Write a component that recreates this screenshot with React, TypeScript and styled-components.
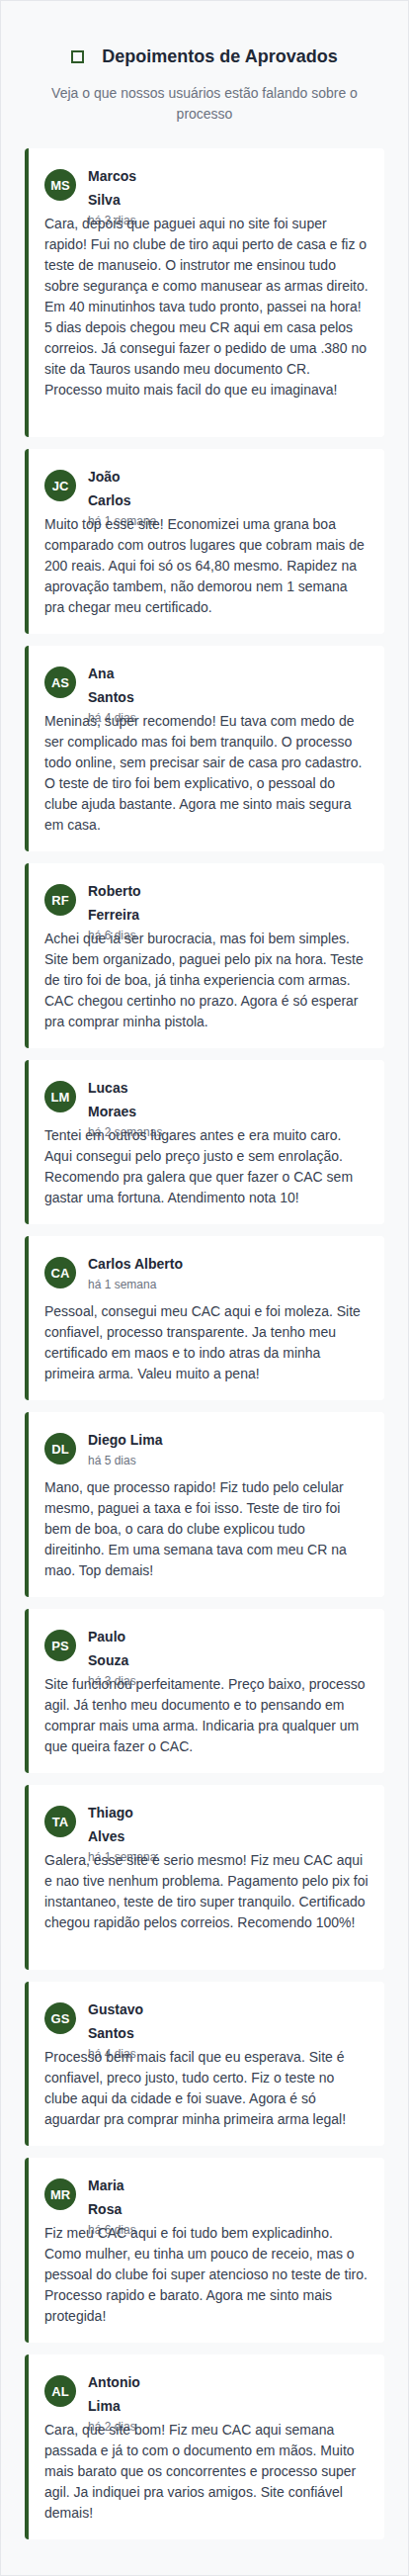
import { createGlobalStyle, styled } from "styled-components";

const GlobalStyle = createGlobalStyle`
    html, body {
        margin: 0;
        padding: 0;
        background: #ffffff;
    }
    body {
        font-family: "Liberation Sans", Arial, Helvetica, sans-serif;
        -webkit-font-smoothing: antialiased;
    }
`;

const Section = styled("section")`
    background: #f8f9fa;
    border: 1px solid #e5e7eb;
    padding: 42px 24px 24px;
    min-height: 2605px;
    box-sizing: border-box;
`;

const Heading = styled("h2")`
    display: flex;
    align-items: center;
    justify-content: center;
    gap: 18px;
    margin: 0;
    font-size: 18px;
    line-height: 28px;
    font-weight: 700;
    color: #1f2937;
`;

const HeadingIcon = styled("span")`
    display: inline-block;
    width: 13px;
    height: 13px;
    box-sizing: border-box;
    border: 2px solid #2d5a27;
`;

const Subtitle = styled("p")`
    margin: 13px 0 24px;
    text-align: center;
    font-size: 14px;
    line-height: 21px;
    color: #6b7280;
`;

const Card = styled("article")<{ $trailing?: boolean }>`
    background: #ffffff;
    border-left: 4px solid #2d5a27;
    border-radius: 4px;
    padding: 16px 16px ${(p) => (p.$trailing ? "37px" : "16px")} 16px;
    margin-bottom: 12px;
`;

const CardHeader = styled("div")`
    display: flex;
    align-items: center;
    height: 42px;
    margin-bottom: 8px;
`;

const Avatar = styled("div")`
    flex: 0 0 32px;
    width: 32px;
    height: 32px;
    border-radius: 50%;
    background: #2d5a27;
    color: #ffffff;
    font-size: 13px;
    font-weight: 700;
    display: flex;
    align-items: center;
    justify-content: center;
    margin-right: 12px;
`;

const Info = styled("div")`
    align-self: flex-start;
    display: flex;
    flex-direction: column;
`;

const Name = styled("div")`
    font-size: 14px;
    font-weight: 700;
    line-height: 24px;
    color: #1f2937;
`;

const When = styled("div")`
    font-size: 12px;
    line-height: 18px;
    color: #6b7280;
`;

const Body = styled("p")`
    margin: 0;
    font-size: 14px;
    line-height: 21px;
    color: #374151;
`;

type Review = {
    initials: string;
    name: string[];
    when: string;
    text: string;
    trailing?: boolean;
};

const reviews: Review[] = [
    {
        initials: "MS",
        name: ["Marcos", "Silva"],
        when: "há 3 dias",
        text: "Cara, depois que paguei aqui no site foi super rapido! Fui no clube de tiro aqui perto de casa e fiz o teste de manuseio. O instrutor me ensinou tudo sobre segurança e como manusear as armas direito. Em 40 minutinhos tava tudo pronto, passei na hora! 5 dias depois chegou meu CR aqui em casa pelos correios. Já consegui fazer o pedido de uma .380 no site da Tauros usando meu documento CR. Processo muito mais facil do que eu imaginava!",
        trailing: true,
    },
    {
        initials: "JC",
        name: ["João", "Carlos"],
        when: "há 1 semana",
        text: "Muito top esse site! Economizei uma grana boa comparado com outros lugares que cobram mais de 200 reais. Aqui foi só os 64,80 mesmo. Rapidez na aprovação tambem, não demorou nem 1 semana pra chegar meu certificado.",
    },
    {
        initials: "AS",
        name: ["Ana", "Santos"],
        when: "há 4 dias",
        text: "Meninas, super recomendo! Eu tava com medo de ser complicado mas foi bem tranquilo. O processo todo online, sem precisar sair de casa pro cadastro. O teste de tiro foi bem explicativo, o pessoal do clube ajuda bastante. Agora me sinto mais segura em casa.",
    },
    {
        initials: "RF",
        name: ["Roberto", "Ferreira"],
        when: "há 6 dias",
        text: "Achei que ia ser burocracia, mas foi bem simples. Site bem organizado, paguei pelo pix na hora. Teste de tiro foi de boa, já tinha experiencia com armas. CAC chegou certinho no prazo. Agora é só esperar pra comprar minha pistola.",
    },
    {
        initials: "LM",
        name: ["Lucas", "Moraes"],
        when: "há 2 semanas",
        text: "Tentei em outros lugares antes e era muito caro. Aqui consegui pelo preço justo e sem enrolação. Recomendo pra galera que quer fazer o CAC sem gastar uma fortuna. Atendimento nota 10!",
    },
    {
        initials: "CA",
        name: ["Carlos Alberto"],
        when: "há 1 semana",
        text: "Pessoal, consegui meu CAC aqui e foi moleza. Site confiavel, processo transparente. Ja tenho meu certificado em maos e to indo atras da minha primeira arma. Valeu muito a pena!",
    },
    {
        initials: "DL",
        name: ["Diego Lima"],
        when: "há 5 dias",
        text: "Mano, que processo rapido! Fiz tudo pelo celular mesmo, paguei a taxa e foi isso. Teste de tiro foi bem de boa, o cara do clube explicou tudo direitinho. Em uma semana tava com meu CR na mao. Top demais!",
    },
    {
        initials: "PS",
        name: ["Paulo", "Souza"],
        when: "há 3 dias",
        text: "Site funcionou perfeitamente. Preço baixo, processo agil. Já tenho meu documento e to pensando em comprar mais uma arma. Indicaria pra qualquer um que queira fazer o CAC.",
    },
    {
        initials: "TA",
        name: ["Thiago", "Alves"],
        when: "há 1 semana",
        text: "Galera, esse site é serio mesmo! Fiz meu CAC aqui e nao tive nenhum problema. Pagamento pelo pix foi instantaneo, teste de tiro super tranquilo. Certificado chegou rapidão pelos correios. Recomendo 100%!",
        trailing: true,
    },
    {
        initials: "GS",
        name: ["Gustavo", "Santos"],
        when: "há 4 dias",
        text: "Processo bem mais facil que eu esperava. Site é confiavel, preco justo, tudo certo. Fiz o teste no clube aqui da cidade e foi suave. Agora é só aguardar pra comprar minha primeira arma legal!",
    },
    {
        initials: "MR",
        name: ["Maria", "Rosa"],
        when: "há 6 dias",
        text: "Fiz meu CAC aqui e foi tudo bem explicadinho. Como mulher, eu tinha um pouco de receio, mas o pessoal do clube foi super atencioso no teste de tiro. Processo rapido e barato. Agora me sinto mais protegida!",
    },
    {
        initials: "AL",
        name: ["Antonio", "Lima"],
        when: "há 2 dias",
        text: "Cara, que site bom! Fiz meu CAC aqui semana passada e já to com o documento em mãos. Muito mais barato que os concorrentes e processo super agil. Ja indiquei pra varios amigos. Site confiável demais!",
    },
];

const ReviewCard = ({ review }: { review: Review }) => (
    <Card $trailing={review.trailing}>
        <CardHeader>
            <Avatar>{review.initials}</Avatar>
            <Info>
                {review.name.map((part) => (
                    <Name key={part}>{part}</Name>
                ))}
                <When>{review.when}</When>
            </Info>
        </CardHeader>
        <Body>{review.text}</Body>
    </Card>
);

export default function App() {
    return (
        <>
            <GlobalStyle />
            <Section>
                <Heading>
                    <HeadingIcon />
                    Depoimentos de Aprovados
                </Heading>
                <Subtitle>Veja o que nossos usuários estão falando sobre o processo</Subtitle>
                {reviews.map((r) => (
                    <ReviewCard key={r.initials + r.when} review={r} />
                ))}
            </Section>
        </>
    );
}
